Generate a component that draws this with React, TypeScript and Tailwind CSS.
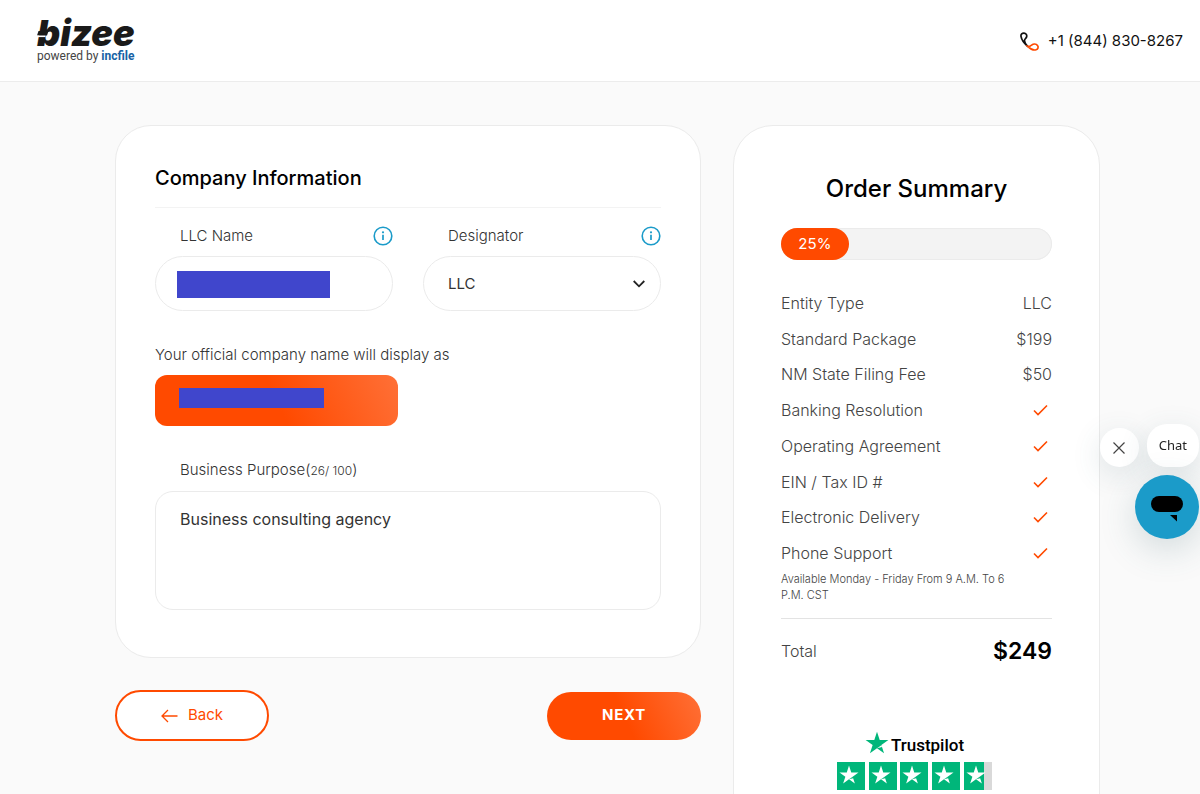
import React, { useState } from 'react';

const STAR = 'M14 4.5l2.25 6.9h7.25l-5.87 4.26 2.24 6.9L14 18.3l-5.87 4.26 2.24-6.9L4.5 11.4h7.25z';

const orderItems: { label: string; value?: string }[] = [
  { label: 'Entity Type', value: 'LLC' },
  { label: 'Standard Package', value: '$199' },
  { label: 'NM State Filing Fee', value: '$50' },
  { label: 'Banking Resolution' },
  { label: 'Operating Agreement' },
  { label: 'EIN / Tax ID #' },
  { label: 'Electronic Delivery' },
  { label: 'Phone Support' },
];

const InfoButton: React.FC<{ label: string }> = ({ label }) => (
  <button type="button" aria-label={label} className="text-[#1b9bc9]">
    <svg width="20" height="20" viewBox="0 0 20 20" fill="none">
      <circle cx="10" cy="10" r="8.8" stroke="currentColor" strokeWidth="1.6" />
      <circle cx="10" cy="6.3" r="1.1" fill="currentColor" />
      <path d="M10 8.8v5.2" stroke="currentColor" strokeWidth="1.7" />
    </svg>
  </button>
);

const PhoneIcon: React.FC = () => (
  <svg width="20" height="20" viewBox="0 0 20 20" fill="none" strokeWidth="1.7" strokeLinecap="round">
    <path d="M7.6 14.3C4.5 11.5 1.500 7.300 1 4.300.7 2.300 2.200 1 4 1.100c1.900.1 3 1.600 2.700 3.400C6.400 6.200 4.600 6.900 4.500 8.500c-.1 1.900 1.600 4.200 3.100 5.800" stroke="#111" />
    <path d="M7.8 14.4c1.500.3 2.600-.4 3.800-1.300 1.900-1.400 4.600-1.300 5.900.4 1.200 1.600.6 3.700-1.400 4.300-2.700.8-5.900-1-8.300-3.400z" stroke="#ff4a00" />
  </svg>
);

const CheckIcon: React.FC = () => (
  <svg width="15" height="12" viewBox="0 0 15 12" fill="none" className="mr-1 ml-auto" role="img" aria-label="Included">
    <path d="M1 6.500l4 4L14 1.500" stroke="#ff4a00" strokeWidth="1.600" />
  </svg>
);

const Logo: React.FC = () => (
  <a href="#" className="flex flex-col text-[#1a1a1a]">
    <span className="relative font-['Inter',sans-serif] text-[36px] leading-[30px] font-black italic">
      bizee
      <svg width="20" height="30" viewBox="0 0 20 30" className="absolute top-0 left-0">
        <path d="M0 17.500L1.500 13h10L10 17.500z" fill="#1a1a1a" />
        <path d="M0 18.300h8.500" stroke="#fff" strokeWidth="1.600" />
      </svg>
    </span>
    <span className="font-['Roboto',sans-serif] text-[12px] leading-4 font-normal text-[#444]">
      powered by <span className="font-bold text-[#1762a5]">incfile</span>
    </span>
  </a>
);

const Trustpilot: React.FC = () => (
  <a href="#" className="mt-16 flex flex-col items-center pr-1 text-black">
    <span className="flex items-start gap-[2px]">
      <svg width="24" height="23" viewBox="4 4 20 19">
        <path d={STAR} fill="#00b67a" />
        <path d="M18.200 17.300l-.5-1.600L14 18.300z" fill="#fff" />
      </svg>
      <span className="pt-[2px] font-['Roboto',sans-serif] text-[17px] leading-6 font-medium">Trustpilot</span>
    </span>
    <svg width="155" height="28" viewBox="0 0 155 28" className="mt-[5px]" role="img" aria-label="4.7 out of 5 stars">
      <rect x="127" width="28" height="28" fill="#d9d9d9" />
      {[0, 32, 63, 95, 127].map((x, i) => (
        <g key={x} transform={`translate(${x} 0)`}>
          <rect width={i === 4 ? 20 : 28} height="28" fill="#00b67a" />
          <path d={STAR} fill="#fff" transform="translate(-2 -1)" />
          <path d="M18.200 17.300l-.5-1.600L14 18.300z" fill="#00b67a" transform="translate(-2 -1)" />
        </g>
      ))}
    </svg>
  </a>
);

const ChatWidget: React.FC = () => (
  <div className="fixed top-[424px] right-px flex flex-col items-end gap-2">
    <div className="flex items-end gap-2">
      <button
        type="button"
        aria-label="Close chat"
        className="flex size-[39px] items-center justify-center rounded-full bg-white text-[#444] shadow-[0_8px_30px_rgba(60,100,110,0.16)]"
      >
        <svg width="12" height="12" viewBox="0 0 12 12" fill="none" stroke="currentColor" strokeWidth="1.200">
          <path d="M.5.5l11 11M11.500.5l-11 11" />
        </svg>
      </button>
      <button
        type="button"
        className="h-[43px] rounded-[20px] bg-white px-3 font-['Noto_Sans',sans-serif] text-[13px] font-normal text-[#222] shadow-[0_8px_30px_rgba(60,100,110,0.16)]"
      >
        Chat
      </button>
    </div>
    <button
      type="button"
      aria-label="Open chat"
      className="flex size-16 items-center justify-center rounded-full bg-[#1b9bc9] pt-1 shadow-[0_10px_36px_rgba(60,100,110,0.22)]"
    >
      <svg width="32" height="26" viewBox="0 0 32 26">
        <rect width="32" height="16" rx="8" />
        <path d="M19 19h7v6.500z" />
      </svg>
    </button>
  </div>
);

const CompanyForm: React.FC = () => {
  const [companyName, setCompanyName] = useState('');
  const [purpose, setPurpose] = useState('Business consulting agency');

  return (
    <section className="rounded-[36px] border border-[#ebebeb] bg-white px-[39px] pt-[38px] pb-[47px]">
      <h1 className="border-b border-[#f3f3f3] pb-[15px] text-[20px] leading-7 font-medium text-black">Company Information</h1>

      <div className="mt-4 grid grid-cols-2 gap-[30px]">
        <div>
          <div className="flex h-6 items-center justify-between pl-[25px]">
            <label htmlFor="llc-name">LLC Name</label>
            <InfoButton label="About LLC name" />
          </div>
          <div className="relative mt-2">
            <input
              id="llc-name"
              type="text"
              value={companyName}
              onChange={(e) => setCompanyName(e.target.value)}
              className="h-[55px] w-full rounded-full border border-[#ebebeb] px-6 focus:outline-none"
            />
            <span className="absolute top-[15px] left-[22px] h-[27px] w-[153px] bg-[#4046cc]" />
          </div>
        </div>
        <div>
          <div className="flex h-6 items-center justify-between pl-[25px]">
            <label htmlFor="designator">Designator</label>
            <InfoButton label="About designator" />
          </div>
          <div className="relative mt-2">
            <select
              id="designator"
              className="h-[55px] w-full appearance-none rounded-full border border-[#ebebeb] bg-white px-6 pt-[2px] font-normal focus:outline-none"
            >
              <option>LLC</option>
              <option>L.L.C.</option>
              <option>Limited Liability Company</option>
            </select>
            <svg
              width="12"
              height="8"
              viewBox="0 0 12 8"
              fill="none"
              stroke="#222"
              strokeWidth="1.800"
              className="pointer-events-none absolute top-6 right-4"
            >
              <path d="M.7 1L6 6.300 11.300 1" />
            </svg>
          </div>
        </div>
      </div>

      <p className="mt-8 leading-6">Your official company name will display as</p>
      <div className="mt-2 h-[51px] w-[243px] rounded-xl bg-[linear-gradient(65deg,#ff4a00_50%,#ff7037)] px-6 pt-[13px]">
        <div className="h-5 w-[145px] bg-[#4046cc]" />
      </div>

      <label htmlFor="purpose" className="mt-8 block pl-[25px] leading-6">
        Business Purpose(<span className="text-[12px]">{purpose.length}/ 100</span>)
      </label>
      <textarea
        id="purpose"
        maxLength={100}
        value={purpose}
        onChange={(e) => setPurpose(e.target.value)}
        className="mt-2 block h-[119px] w-full resize-none rounded-[18px] border border-[#ebebeb] px-6 py-[15px] text-[16px] leading-6 font-normal focus:outline-none"
      />
    </section>
  );
};

const OrderSummary: React.FC = () => {
  const progress = 25;

  return (
    <aside className="w-[367px] shrink-0 rounded-[40px] border border-[#ebebeb] bg-white px-[47px] pt-[47px] pb-12 text-[16px] text-[#444]">
      <h2 className="text-center text-[24px] leading-8 font-medium text-black">Order Summary</h2>
      <div className="mt-[23px] h-8 rounded-full bg-[#f3f3f3] ring-1 ring-[#ebebeb] ring-inset">
        <div
          className="flex h-full items-center justify-center rounded-full bg-[#ff4a00] text-[15px] font-normal text-white"
          style={{ width: `${progress}%` }}
        >
          {progress}%
        </div>
      </div>

      <table className="mt-[25px] h-[286px] w-full">
        <tbody>
          {orderItems.map((item) => (
            <tr key={item.label}>
              <th scope="row" className="p-0 text-left font-light">{item.label}</th>
              <td className="p-0 text-right">{item.value ?? <CheckIcon />}</td>
            </tr>
          ))}
        </tbody>
      </table>
      <p className="w-[240px] text-[11px] leading-4">Available Monday - Friday From 9 A.M. To 6 P.M. CST</p>

      <div className="mt-[15px] flex items-center justify-between border-t border-[#e3e3e3] pt-4">
        <span>Total</span>
        <span className="text-[23px] leading-8 font-semibold text-black">$249</span>
      </div>
      <Trustpilot />
    </aside>
  );
};

const App: React.FC = () => {
  return (
    <div className="min-h-screen bg-[#fafafa] font-['Inter',sans-serif] text-[15px] font-light text-[#333]">
      <header className="flex h-[82px] items-center justify-between border-b border-[#ececec] bg-white pr-[17px] pl-[37px]">
        <Logo />
        <a href="tel:+18448308267" className="flex items-center gap-2 pt-[2px] font-normal text-[#111]">
          <PhoneIcon />
          +1 (844) 830-8267
        </a>
      </header>

      <main className="flex items-start gap-8 pt-[43px] pr-[100px] pl-[115px]">
        <div className="min-w-0 flex-1">
          <CompanyForm />
          <div className="mt-8 flex items-center justify-between">
            <button
              type="button"
              className="flex h-[51px] w-[154px] items-center justify-center gap-[10px] rounded-full border-2 border-[#ff4a00] bg-white font-normal text-[#ff4a00]"
            >
              <svg width="17" height="14" viewBox="0 0 17 14" fill="none" stroke="currentColor" strokeWidth="1.300">
                <path d="M16.500 7H1M7 1L1 7l6 6" />
              </svg>
              Back
            </button>
            <button
              type="button"
              className="h-12 w-[154px] rounded-full bg-[linear-gradient(65deg,#ff4a00_50%,#ff7037)] font-bold tracking-wider text-white"
            >
              NEXT
            </button>
          </div>
        </div>
        <OrderSummary />
      </main>
      <ChatWidget />
    </div>
  );
};

export default App;
